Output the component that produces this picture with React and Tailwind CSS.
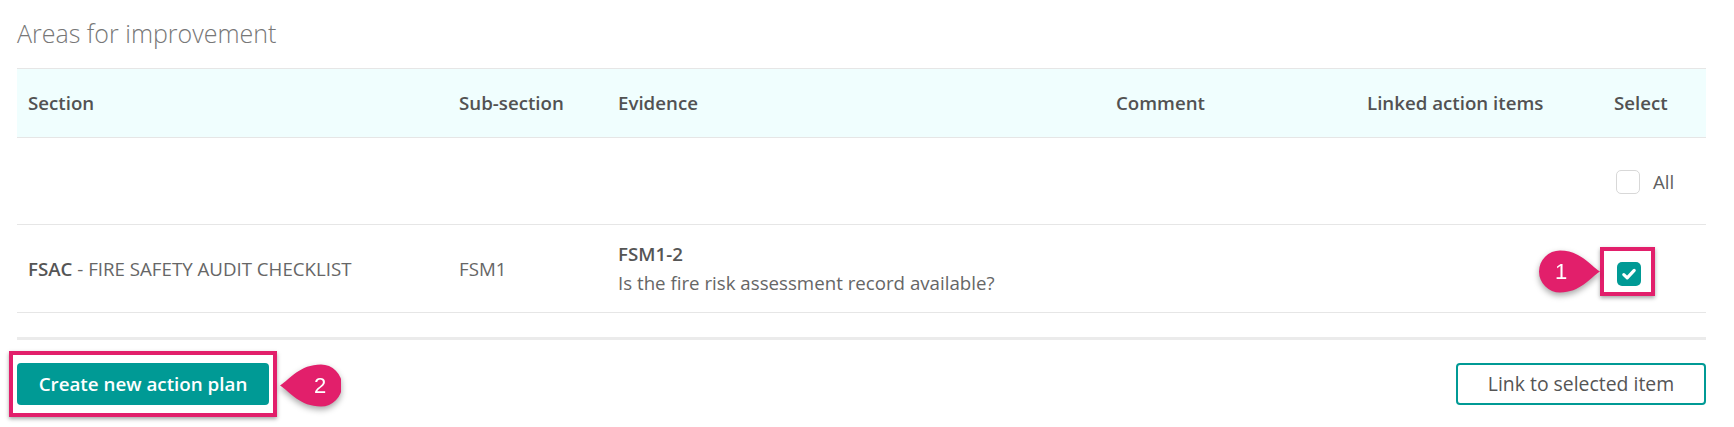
import React, { useState } from "react";

function Checkbox({ checked, onChange }) {
  return (
    <button
      onClick={onChange}
      className={`flex h-[24px] w-[24px] items-center justify-center rounded-[5px] ${
        checked ? "bg-[#009a95]" : "border border-[#d8d8d8] bg-white"
      }`}
    >
      {checked && (
        <svg width="16" height="16" viewBox="0 0 16 16">
          <path
            d="M2.8 8.6 L6.2 11.8 L13.2 4.4"
            fill="none"
            stroke="white"
            strokeWidth="3.2"
            strokeLinecap="round"
            strokeLinejoin="round"
          />
        </svg>
      )}
    </button>
  );
}

function Callout({ num, dir }) {
  // teardrop marker, point on the left (dir "left") or right
  const d =
    dir === "left"
      ? "M0,21.5 C10,15 20,0.5 41,0.5 A21,21 0 1 1 41,42.5 C20,42.5 10,28 0,21.5 Z"
      : "M61,21.5 C51,15 41,0.5 21,0.5 A21,21 0 1 0 21,42.5 C41,42.5 51,28 61,21.5 Z";
  const cx = dir === "left" ? "left-[19px]" : "left-[1px]";
  return (
    <div className="relative h-[43px] w-[61px] drop-shadow-[0_3px_3px_rgba(0,0,0,0.35)]">
      <svg width="61" height="43" viewBox="0 0 61 43" className="absolute inset-0">
        <path d={d} fill="#e21f6b" />
      </svg>
      <span
        className={`absolute top-0 ${cx} flex h-[43px] w-[42px] items-center justify-center font-['Liberation_Sans',Arial,sans-serif] text-[22px] text-white`}
      >
        {num}
      </span>
    </div>
  );
}

const cols = "grid grid-cols-[431px_159px_498px_251px_247px_103px]";

export default function App() {
  const [all, setAll] = useState(false);
  const [picked, setPicked] = useState(true);

  return (
    <div className="h-[427px] w-full overflow-hidden bg-white px-[17px] pt-[16px] font-['Open_Sans',sans-serif]">
      <h2 className="text-[25px] font-light leading-[34px] text-[#777]">
        Areas for improvement
      </h2>

      {/* Table */}
      <div className="mt-[18px] w-[1689px]">
        <div
          className={`${cols} h-[70px] items-center border-y border-[#e6e6e6] bg-[#f0fefe] text-[18.7px] font-semibold leading-[24px] text-[#525252]`}
        >
          <div className="pl-[11px]">Section</div>
          <div className="pl-[11px]">Sub-section</div>
          <div className="pl-[11px]">Evidence</div>
          <div className="pl-[11px]">Comment</div>
          <div className="pl-[11px]">Linked action items</div>
          <div className="pl-[11px]">Select</div>
        </div>

        <div className={`${cols} h-[87px] items-center border-b border-[#e6e6e6]`}>
          <div />
          <div />
          <div />
          <div />
          <div />
          <div className="flex items-center gap-[13px] pl-[13px] pt-[3px] text-[18.7px] text-[#606060]">
            <Checkbox checked={all} onChange={() => setAll(!all)} />
            <span>All</span>
          </div>
        </div>

        <div
          className={`${cols} h-[88px] items-center border-b border-[#e6e6e6] text-[18.7px] leading-[29px] text-[#666]`}
        >
          <div className="pl-[11px]">
            <span className="font-semibold text-[#555]">FSAC</span> - FIRE SAFETY AUDIT CHECKLIST
          </div>
          <div className="pl-[11px]">FSM1</div>
          <div className="pl-[11px] pb-[2px]">
            <div className="font-semibold text-[#555]">FSM1-2</div>
            <div>Is the fire risk assessment record available?</div>
          </div>
          <div />
          <div />
          <div className="pl-[14px] pt-[10px]">
            <div className="relative h-[24px] w-[24px]">
              <Checkbox checked={picked} onChange={() => setPicked(!picked)} />
              <div className="pointer-events-none absolute -left-[17px] -right-[14px] -top-[15px] -bottom-[10px] border-[4px] border-[#e21f6b] shadow-[0_2px_4px_rgba(0,0,0,0.35)]" />
              <div className="absolute right-[41px] -top-[12px]">
                <Callout num="1" dir="right" />
              </div>
            </div>
          </div>
        </div>

        <div className="h-[27px] border-b-[3px] border-[#ebebeb]" />
      </div>

      {/* Actions */}
      <div className="mt-[23px] flex w-[1689px] items-center justify-between">
        <div className="relative">
          <button className="h-[42px] w-[252px] rounded-[4px] bg-[#009a95] text-[18.8px] font-semibold text-white">
            Create new action plan
          </button>
          <div className="pointer-events-none absolute -left-[8px] -right-[8px] -top-[12px] -bottom-[12px] border-[4px] border-[#e21f6b] shadow-[0_2px_4px_rgba(0,0,0,0.35)]" />
          <div className="absolute left-[263px] top-[1px]">
            <Callout num="2" dir="left" />
          </div>
        </div>
        <button className="h-[42px] w-[250px] rounded-[4px] border-2 border-[#009a95] bg-white text-[19.4px] text-[#555]">
          Link to selected item
        </button>
      </div>
    </div>
  );
}
